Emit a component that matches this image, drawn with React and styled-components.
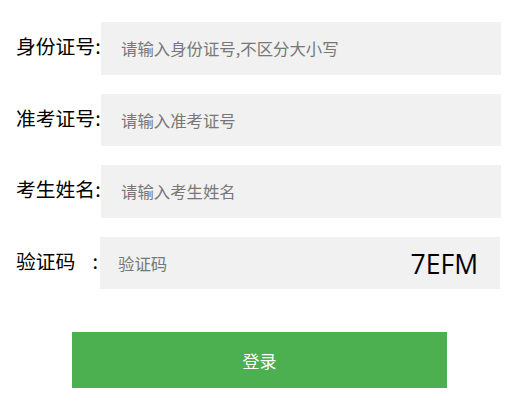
import React from "react";
import styled, { createGlobalStyle } from "styled-components";

const Global = createGlobalStyle`
  html, body { margin: 0; padding: 0; background: #fff; }
  body { font-family: "Noto Sans CJK SC", "Noto Sans", sans-serif; }
  input::placeholder { color: #777; opacity: 1; }
`;

const Form = styled.form`
  display: flex;
  flex-direction: column;
  padding: 22px 0 0 16px;
  width: 485px;
`;

const Row = styled.div`
  display: flex;
  align-items: center;
  height: 52.5px;
  margin-bottom: 19px;
`;

const Label = styled.label`
  display: flex;
  justify-content: ${(p) => (p.$spread ? "space-between" : "flex-start")};
  align-items: center;
  width: ${(p) => p.$w}px;
  padding-bottom: 4px;
  font-size: 19.8px;
  color: #000;
  white-space: nowrap;
  line-height: 1;
`;

const Colon = styled.span`
  padding-right: ${(p) => p.$pr || 0}px;
`;

const Field = styled.div`
  display: flex;
  align-items: center;
  width: 400px;
  height: 100%;
  background: #f1f1f1;
  box-sizing: border-box;
  padding: 0 22px 0 ${(p) => p.$pl}px;
`;

const Input = styled.input`
  flex: 1;
  min-width: 0;
  border: none;
  outline: none;
  background: transparent;
  font-family: "Noto Sans CJK SC", "Noto Sans", sans-serif;
  font-size: 16.4px;
  color: #333;
  padding: 0;
  height: 30px;
`;

const Captcha = styled.span`
  font-family: "Open Sans", "Noto Sans", sans-serif;
  font-size: 26.5px;
  color: #000;
  margin-top: 2px;
`;

const Submit = styled.button`
  margin: 24px 0 0 56px;
  width: 375px;
  height: 56px;
  border: none;
  background: #4caf50;
  color: #fff;
  font-family: "Noto Sans CJK SC", "Noto Sans", sans-serif;
  font-size: 17px;
  cursor: pointer;
  padding: 0;
`;

export default function App() {
  return (
    <>
      <Global />
      <Form onSubmit={(e) => e.preventDefault()}>
        <Row>
          <Label $w={85}>身份证号<Colon>:</Colon></Label>
          <Field $pl={20}>
            <Input placeholder="请输入身份证号,不区分大小写" />
          </Field>
        </Row>
        <Row>
          <Label $w={85}>准考证号<Colon>:</Colon></Label>
          <Field $pl={20}>
            <Input placeholder="请输入准考证号" />
          </Field>
        </Row>
        <Row>
          <Label $w={85}>考生姓名<Colon>:</Colon></Label>
          <Field $pl={20}>
            <Input placeholder="请输入考生姓名" />
          </Field>
        </Row>
        <Row>
          <Label $w={84} $spread>
            <span>验证码</span>
            <Colon $pr={2}>:</Colon>
          </Label>
          <Field $pl={18}>
            <Input placeholder="验证码" />
            <Captcha>7EFM</Captcha>
          </Field>
        </Row>
        <Submit type="submit">登录</Submit>
      </Form>
    </>
  );
}
